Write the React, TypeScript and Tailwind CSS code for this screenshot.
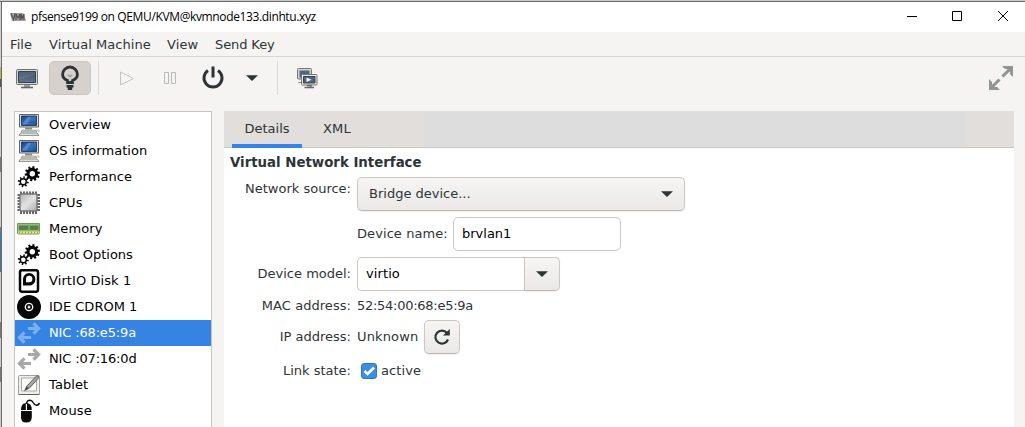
import React from "react";

const Monitor = () => (
  <svg width="24" height="24" viewBox="0 0 24 24">
    <defs>
      <linearGradient id="screen" x1="0" y1="0" x2="1" y2="1">
        <stop offset="0" stopColor="#123f86" />
        <stop offset=".5" stopColor="#3a73b8" />
        <stop offset="1" stopColor="#1b4c94" />
      </linearGradient>
    </defs>
    <path d="M2.5 1.5h19v12.500h-19z" fill="#d9d8d0" stroke="#65665f" />
    <path d="M4.500 3h15v9.500h-15z" fill="url(#screen)" stroke="#0d2f69" strokeWidth=".8" />
    <path d="M5.500 11l5-7h4l-5 7z" fill="#6c9dd4" opacity=".6" />
    <path d="M8 14.500h7v2H8z" fill="#8b8c84" />
    <path d="M5 17.200h14l1 1.600H4z" fill="#efefea" stroke="#85867f" strokeWidth=".8" />
    <path d="M3.500 20h16.500l2 2.400h-20z" fill="#e8e8e2" stroke="#777870" strokeWidth=".8" />
    <path d="M19.500 17h2q1.500 .8 0 2" fill="none" stroke="#aaa" />
  </svg>
);

const Gear = ({ x, y, r, w, n }: { x: number; y: number; r: number; w: number; n: number }) => (
  <g fill="none" stroke="#080808" transform={`translate(${x} ${y})`}>
    <circle r={r} strokeWidth={w} />
    {Array.from({ length: n }, (_, i) => (
      <path key={i} d={`M0 ${-r}V${-r - w * 0.5 - 1.7}`} strokeWidth={w > 2 ? 2.1 : 1.5} transform={`rotate(${(i * 360) / n + 10})`} />
    ))}
  </g>
);

const Gears = () => (
  <svg width="24" height="24" viewBox="0 0 24 24">
    <Gear x={15.3} y={8.7} r={4.3} w={3.2} n={10} />
    <Gear x={6.3} y={16.8} r={3} w={1.4} n={8} />
  </svg>
);

const Chip = () => (
  <svg width="24" height="24" viewBox="0 0 24 24">
    <defs>
      <linearGradient id="chip" x1="0" y1="0" x2="1" y2="1">
        <stop offset="0" stopColor="#b2b2b2" />
        <stop offset=".5" stopColor="#e2e2e2" />
        <stop offset="1" stopColor="#ababab" />
      </linearGradient>
    </defs>
    {[4, 7, 10, 13, 16, 19].map((p) => (
      <path key={p} d={`M${p} .5v3M${p} 19.500v3.500M.5 ${p}h3M19.500 ${p}h3.500`} stroke="#666" strokeWidth="2" />
    ))}
    <rect x="3" y="3" width="17" height="17" rx="1" fill="url(#chip)" stroke="#777" strokeWidth="1.400" />
  </svg>
);

const Memory = () => (
  <svg width="24" height="24" viewBox="0 0 24 24">
    <path d="M.5 6.500h22v10H.5z" fill="#8fbd74" stroke="#6f9855" />
    <path d="M2.500 9h8.500v3.500H2.500zM13 9h8v3.500h-8z" fill="#637a59" stroke="#4a7140" strokeWidth=".7" />
    <path d="M11.800 7.500v6" stroke="#47c94c" strokeWidth="1.200" />
    <path d="M1 15.500h21.500" stroke="#efe27f" strokeWidth="2.200" />
    <path d="M2 15.500h20" stroke="#8ba451" strokeWidth="2" strokeDasharray="1 2" />
    <path d="M1 17.500h21" stroke="#bdc9b5" />
  </svg>
);

const Disk = () => (
  <svg width="24" height="24" viewBox="0 0 24 24">
    <rect x="3" y="1.200" width="18" height="21.600" rx="2" fill="#fff" stroke="#080808" strokeWidth="2.500" />
    <path d="M6 16.500V10.500a6.200 6.200 0 1 1 6.200 6z" fill="#080808" />
    <path d="M9 13.200V10a3.200 3.200 0 1 1 3.200 3.200z" fill="#fff" />
  </svg>
);

const Disc = () => (
  <svg width="24" height="24" viewBox="0 0 24 24">
    <circle cx="12" cy="12" r="12" fill="#080808" />
    <circle cx="12" cy="12" r="3.700" fill="none" stroke="#fff" strokeWidth="1.300" />
    <circle cx="12" cy="12" r="1.500" fill="#ddd" />
  </svg>
);

const Nic = ({ color }: { color: string }) => (
  <svg width="24" height="24" viewBox="0 0 24 24">
    <path d="M11 7.500h11M16.500 2.300l5 5.200-5 5.200M2.500 16.500H14M7.500 11.300l-5 5.200 5 5.200" fill="none" stroke={color} strokeWidth="3.200" />
  </svg>
);

const Tablet = () => (
  <svg width="24" height="24" viewBox="0 0 24 24">
    <rect x="1.500" y="2.500" width="21" height="19" rx="1" fill="#eeeeeb" stroke="#a2a39e" />
    <path d="M4.500 5h15v13h-15z" fill="#fafaf8" stroke="#aaa" />
    <path d="M1.500 21.500h21" stroke="#60615c" />
    <path d="M20 2.500q2.500 0 1 3L12 15.500l-3-1.500z" fill="#a8aaa7" stroke="#555753" />
    <path d="M7 18.500l2-4.500 3 1.500z" fill="#444" />
  </svg>
);

const Mouse = () => (
  <svg width="24" height="24" viewBox="0 0 24 24">
    <path d="M4 11q0-7 5.300-7 5.500 0 5.500 7z" fill="#080808" />
    <path d="M4 12h10.800v6q0 5.500-5.500 5.500T4 18z" fill="#080808" />
    <path d="M9.400 3v9" stroke="#fff" strokeWidth="1.200" />
    <path d="M9.500 5q0-3.700 3.500-3.700c4 0 2.500 5 6.500 5q2.500-.2 2.800-2.500" fill="none" stroke="#080808" strokeWidth="1.400" />
  </svg>
);

const Vmm = () => (
  <svg width="16" height="10" viewBox="0 0 16 10">
    <path d="M0 1h13l3 8H2z" fill="#a49e9e" />
    <path d="M1 1.500l2.500 6 1.500-6M6 8V2l2 4 2-4v6M11 8V2l1.500 4 1.500-4v6" fill="none" stroke="#5a5254" strokeWidth="1.200" />
  </svg>
);

const Console = () => (
  <svg width="24" height="24" viewBox="0 0 24 24">
    <defs>
      <linearGradient id="con" x1="0" y1="0" x2="0" y2="1">
        <stop offset="0" stopColor="#34465c" />
        <stop offset="1" stopColor="#65768c" />
      </linearGradient>
    </defs>
    <rect x="1.500" y="3.500" width="21" height="15" rx="1" fill="#d3d6cf" stroke="#72756f" />
    <path d="M3.500 5.500h17v11h-17z" fill="url(#con)" stroke="#344457" />
    <path d="M4 6h16v3L4 14z" fill="#8191a2" opacity=".35" />
    <path d="M9 19h6v2H9z" fill="#999" />
    <path d="M6 21.500h12" stroke="#666963" strokeWidth="1.600" />
  </svg>
);

const Bulb = () => (
  <svg width="24" height="26" viewBox="0 0 24 26">
    <path d="M9.500 17.500v-2C6.900 14.300 4.600 12.800 4.600 9.400a7.400 7.400 0 0 1 14.800 0c0 3.400-2.300 4.900-4.900 6.100v2z" fill="none" stroke="#2e3436" strokeWidth="2.800" />
    <path d="M9.800 9.800l2.200 1.900 2.200-1.900" fill="none" stroke="#969997" strokeWidth="1.300" />
    <path d="M8.500 20h7v2.500h-1.300V25H9.800v-2.500H8.500z" fill="#2e3436" />
  </svg>
);

const Snapshots = () => (
  <svg width="22" height="22" viewBox="0 0 22 22">
    <rect x="1.500" y="1.500" width="14" height="10.500" rx="1" fill="#d2d4cd" stroke="#747772" />
    <path d="M3.500 3.500h10v7h-10z" fill="#52657c" />
    <path d="M2.500 15.500H9" stroke="#777" />
    <rect x="5.500" y="7.500" width="15.500" height="10.500" rx="1" fill="#e8eae4" stroke="#747772" />
    <path d="M7.500 9.500h11.500v6.500H7.500z" fill="#52657c" stroke="#2f4256" />
    <path d="M10.500 10.500l5 2.200-5 2.300z" fill="#fff" />
    <path d="M11 18.500h4v1.500M8.500 20.500H18" fill="none" stroke="#666" strokeWidth="1.300" />
  </svg>
);

const Down = () => (
  <svg width="12" height="6" viewBox="0 0 12 6"><path d="M0 .3h12L6 6z" fill="#2e3436" /></svg>
);

const items: [string, React.ReactNode, string][] = [
  ["Overview", <Monitor />, "tracking-[0.1px]"],
  ["OS information", <Monitor />, "tracking-[0.04px]"],
  ["Performance", <Gears />, "tracking-[0.06px]"],
  ["CPUs", <Chip />, "tracking-[0.1px]"],
  ["Memory", <Memory />, "tracking-[0.1px]"],
  ["Boot Options", <Gears />, "tracking-[-0.04px]"],
  ["VirtIO Disk 1", <Disk />, "tracking-[0.08px]"],
  ["IDE CDROM 1", <Disc />, "tracking-[0.02px]"],
  ["NIC :68:e5:9a", <Nic color="#7eb0ef" />, "tracking-[-0.15px]"],
  ["NIC :07:16:0d", <Nic color="#a7a7a7" />, "tracking-[-0.15px]"],
  ["Tablet", <Tablet />, "tracking-[0.1px]"],
  ["Mouse", <Mouse />, "tracking-[0.15px]"],
];

const button = "border border-[#cdc7c2] border-b-[#bfb8b1] bg-linear-to-b from-[#f6f5f4] to-[#eae9e7] shadow-[0_1px_2px_rgba(0,0,0,0.07)]";

export default function App() {
  return (
    <div className="flex h-[427px] w-[1025px] flex-col overflow-hidden bg-[#f5f4f3] font-['DejaVu_Sans',sans-serif] text-[13px] leading-4 text-[#2e3436]">
      <div className="h-px shrink-0 bg-[#c8c9c7]" />
      <div className="h-px shrink-0 bg-[#6c6c6c]" />
      <div className="flex min-h-0 flex-1">
        <div className="w-px shrink-0 bg-[linear-gradient(#d2d2d2_0_65px,#b8b65b_65px_77px,#555_77px_85px,#ccc_85px_155px,#777_155px_170px,#ccc_170px_225px,#777_225px_230px,#2f7bd4_230px_238px,#4773a5_238px_270px,#ccc_270px_320px,#777_320px_336px,#ccc_336px_365px,#777_365px_380px,#ccc_380px)]" />
        <div className="w-px shrink-0 bg-[#6c6c6c]" />
        <div className="flex min-w-0 flex-1 flex-col">
          <header className="flex h-[30px] shrink-0 items-center bg-white pl-2 text-black">
            <Vmm />
            <span className="ml-[5px] whitespace-nowrap font-['Open_Sans',sans-serif] text-[12px] tracking-[-0.37px]">pfsense9199 on QEMU/KVM@kvmnode133.dinhtu.xyz</span>
            <svg className="ml-auto mr-[15px]" width="103" height="12" viewBox="0 0 103 12" fill="none" stroke="#000">
              <path d="M0 5.500h10M45.500 .5h9v9h-9zM91 0l10 10M101 0L91 10" />
            </svg>
          </header>
          <nav className="flex h-[25px] shrink-0 items-center border-b border-[#dad8d6] pl-2 pt-px tracking-[0.1px]">
            <span className="w-[39px]">File</span>
            <span className="w-[118px] whitespace-nowrap tracking-[0.05px]">Virtual Machine</span>
            <span className="w-12">View</span>
            <span className="whitespace-nowrap tracking-[-0.1px]">Send Key</span>
          </nav>
          <div className="flex h-[54px] shrink-0 items-start pt-1">
            <div className="flex h-[34px] w-[47px] items-center pl-[13px]"><Console /></div>
            <div className="flex h-[34px] w-[42px] items-center justify-center rounded-[5px] border border-[#cdc7c2] bg-[#d6d1cd]"><Bulb /></div>
            <div className="ml-[7px] h-[34px] w-px bg-[#d9d6d3]" />
            <svg className="ml-5 mt-2.5" width="16" height="16" viewBox="0 0 16 16"><path d="M1.500 1v13L14.500 7.500z" fill="#f4f4f3" stroke="#c3c5c3" /></svg>
            <svg className="ml-7 mt-2.5" width="14" height="15" viewBox="0 0 14 15"><path d="M1.500 1.500h4v11h-4zM8.500 1.500h4v11h-4z" fill="#f4f4f3" stroke="#b8bab8" /></svg>
            <svg className="ml-[24px] mt-1" width="24" height="25" viewBox="0 0 24 25" fill="none" stroke="#2e3436" strokeWidth="3">
              <path d="M7 5.500a9 9 0 1 0 10 0M12 1.500v11" />
            </svg>
            <div className="ml-[21px] mt-[14px]"><Down /></div>
            <div className="ml-[19px] h-[34px] w-px bg-[#d9d6d3]" />
            <div className="ml-[18px] mt-[6px]"><Snapshots /></div>
            <svg className="ml-auto mr-3 mt-[5px]" width="24" height="24" viewBox="0 0 24 24">
              <path d="M13.500 10.500L21 3M10.500 13.500L3 21" stroke="#919693" strokeWidth="3" />
              <path d="M13 0h11v11l-3-3V6l-3-3h-2zM0 13l3 3v2l3 3h2l3 3H0z" fill="#919693" />
            </svg>
          </div>
          <main className="flex min-h-0 flex-1 pl-3 pr-[11px]">
            <aside className="w-[198px] shrink-0 overflow-hidden border border-b-0 border-[#c9c3bd] bg-white">
              {items.map(([name, icon, spacing], i) => (
                <div key={name} className={i === 8 ? "flex h-[26px] items-center bg-[#3584e4] pl-0.5 text-white" : "flex h-[26px] items-center pl-0.5 text-black"}>
                  {icon}
                  <span className={`ml-2 whitespace-nowrap ${spacing}`}>{name}</span>
                </div>
              ))}
            </aside>
            <section className="ml-3 min-w-0 flex-1 bg-white">
              <div className="flex h-[37px] border-b border-[#c9c5c0] bg-[linear-gradient(90deg,#e1dedb_0_200px,#dddddd_200px_743px,#e1dedb_743px)] pl-2">
                <div className="flex h-[37px] w-[70px] items-center justify-center border-b-4 border-[#3584e4] pt-[3px]">Details</div>
                <div className="flex w-[70px] items-center justify-center tracking-[0.2px]">XML</div>
              </div>
              <div className="pl-1.5 pt-[7px]">
                <h1 className="whitespace-nowrap text-[13.333px] font-bold">Virtual Network Interface</h1>
                <div className="mt-[6px] flex">
                  <span className="w-[121px] pt-1 text-right">Network source:</span>
                  <div className={`ml-1.5 flex h-[34px] w-[328px] items-center justify-between rounded-[5px] pl-[11px] pr-[11px] ${button}`}><span>Bridge device...</span><Down /></div>
                </div>
                <div className="ml-[127px] mt-1.5 flex h-[34px] items-center">
                  <span className="w-24 whitespace-nowrap tracking-[0.08px]">Device name:</span>
                  <div className="flex h-[34px] w-[168px] items-center rounded-[5px] border border-[#cdc7c2] bg-white pl-2 text-black">brvlan1</div>
                </div>
                <div className="mt-1.5 flex h-[34px] items-center">
                  <span className="w-[121px] text-right">Device model:</span>
                  <div className="ml-1.5 flex h-[34px] w-[168px] items-center rounded-l-[5px] border border-r-0 border-[#cdc7c2] bg-white pl-2 tracking-[0.1px] text-black">virtio</div>
                  <div className={`-ml-px flex h-[34px] w-9 items-center justify-center rounded-r-[5px] ${button}`}><Down /></div>
                </div>
                <div className="mt-[7px] flex h-4">
                  <span className="w-[121px] text-right tracking-[0.05px]">MAC address:</span><span className="ml-1.5 tracking-[-0.27px]">52:54:00:68:e5:9a</span>
                </div>
                <div className="mt-[6px] flex h-[34px] items-center">
                  <span className="w-[121px] text-right">IP address:</span><span className="ml-1.5 w-[67px] tracking-[0.15px]">Unknown</span>
                  <div className={`flex h-[34px] w-9 items-center justify-center rounded-[5px] ${button}`}>
                    <svg width="18" height="18" viewBox="0 0 18 18"><path d="M15 11.500A6.500 6.500 0 1 1 14 5" fill="none" stroke="#2e3436" strokeWidth="2.200" /><path d="M16.800 1v6.500H10z" fill="#2e3436" /></svg>
                  </div>
                </div>
                <div className="mt-[9px] flex h-4 items-center">
                  <span className="w-[121px] text-right">Link state:</span>
                  <div className="ml-[10px] flex size-4 items-center justify-center rounded-[3px] border border-[#2b75cf] bg-[#3f8ce8]">
                    <svg width="14" height="14" viewBox="0 0 14 14"><path d="M2.500 7l3 3L12 3.500" fill="none" stroke="#fff" strokeWidth="2.600" /></svg>
                  </div>
                  <span className="ml-1 tracking-[0.1px]">active</span>
                </div>
              </div>
            </section>
          </main>
        </div>
      </div>
    </div>
  );
}
